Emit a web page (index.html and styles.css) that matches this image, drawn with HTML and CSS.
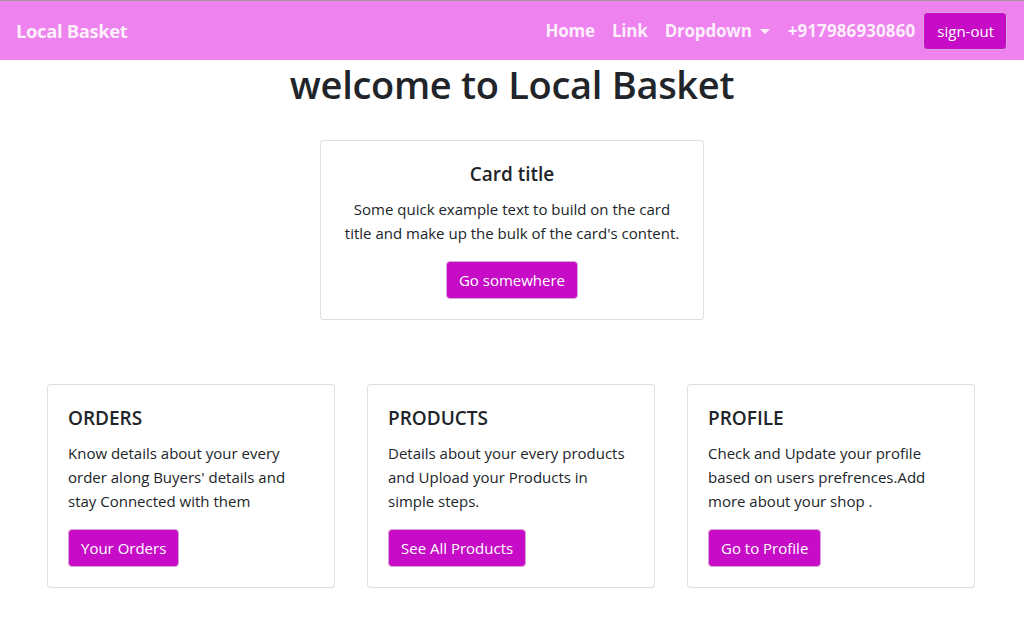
FILE: index.html
```html
<!DOCTYPE html>
<html lang="en">
<head>
<meta charset="utf-8">
<title>Local Basket</title>
<link rel="stylesheet" href="styles.css">
</head>
<body>
<nav class="navbar">
  <a class="brand" href="#">Local Basket</a>
  <ul class="nav">
    <li><a class="nav-link" href="#">Home</a></li>
    <li><a class="nav-link" href="#">Link</a></li>
    <li><a class="nav-link dropdown" href="#">Dropdown <span class="caret"></span></a></li>
    <li><span class="nav-link phone">+917986930860</span></li>
    <li><button class="btn">sign-out</button></li>
  </ul>
</nav>
<main class="main">
  <h1 class="title">welcome to Local Basket</h1>
  <div class="card card-hero">
    <div class="card-body center">
      <h5 class="card-title">Card title</h5>
      <p class="card-text">Some quick example text to build on the card title and make up the bulk of the card's content.</p>
      <a href="#" class="btn">Go somewhere</a>
    </div>
  </div>
  <div class="row">
    <div class="card card-sm">
      <div class="card-body">
        <h5 class="card-title">ORDERS</h5>
        <p class="card-text">Know details about your every order along Buyers' details and stay Connected with them</p>
        <a href="#" class="btn">Your Orders</a>
      </div>
    </div>
    <div class="card card-sm">
      <div class="card-body">
        <h5 class="card-title">PRODUCTS</h5>
        <p class="card-text">Details about your every products and Upload your Products in simple steps.</p>
        <a href="#" class="btn">See All Products</a>
      </div>
    </div>
    <div class="card card-sm">
      <div class="card-body">
        <h5 class="card-title">PROFILE</h5>
        <p class="card-text">Check and Update your profile based on users prefrences.Add more about your shop .</p>
        <a href="#" class="btn">Go to Profile</a>
      </div>
    </div>
  </div>
</main>
</body>
</html>
```
FILE: styles.css
```css
* { box-sizing: border-box; }
html, body {
  margin: 0;
  padding: 0;
  background: #fff;
  font-family: "Open Sans", "Noto Sans", "Liberation Sans", sans-serif;
  font-size: 15px;
  line-height: 24px;
  color: #212529;
}
.navbar {
  display: flex;
  align-items: center;
  justify-content: space-between;
  height: 60px;
  padding: 1px 17px 0 16px;
  background: #ee82ee;
  border-top: 1px solid #9a9a9a;
}
.brand {
  color: rgba(255,255,255,0.9);
  font-size: 18.5px;
  font-weight: 700;
  text-decoration: none;
  letter-spacing: -0.4px;
}
.nav {
  display: flex;
  align-items: center;
  list-style: none;
  margin: 0;
  padding: 0;
}
.nav-link {
  display: flex;
  align-items: center;
  padding: 0 8px 0 9px;
  color: rgba(255,255,255,0.88);
  font-size: 17px;
  font-weight: 700;
  text-decoration: none;
  letter-spacing: -0.2px;
}
.caret {
  display: inline-block;
  margin-left: 8px;
  width: 0;
  height: 0;
  border-left: 5px solid transparent;
  border-right: 5px solid transparent;
  border-top: 5px solid rgba(255,255,255,0.88);
}
.phone { margin-left: 1px; letter-spacing: 0.1px; }
.btn {
  display: inline-block;
  height: 38px;
  padding: 0 12px;
  background: #c60cc6;
  border: 1px solid #d9a6d9;
  border-radius: 4px;
  color: #fff;
  font-family: inherit;
  font-size: 15px;
  line-height: 36px;
  text-decoration: none;
}
.nav .btn { margin-top: -1px; padding: 0 12px 0 13px; }
.main {
  display: flex;
  flex-direction: column;
  align-items: center;
}
.title {
  margin: 0 0 32px;
  font-size: 38px;
  line-height: 48px;
  font-weight: 600;
  letter-spacing: -0.3px;
}
.card {
  border: 1px solid rgba(0,0,0,0.125);
  border-radius: 4px;
  background: #fff;
}
.card-body { padding: 20px; }
.center { text-align: center; }
.card-hero { width: 384px; }
.card-title {
  margin: 1px 0 11px;
  font-size: 19px;
  line-height: 24px;
  font-weight: 600;
}
.card-text { margin: 0 0 16px; }
.row {
  display: flex;
  gap: 32px;
  margin-top: 64px;
  margin-right: 2px;
}
.card-sm { width: 288px; }
```
